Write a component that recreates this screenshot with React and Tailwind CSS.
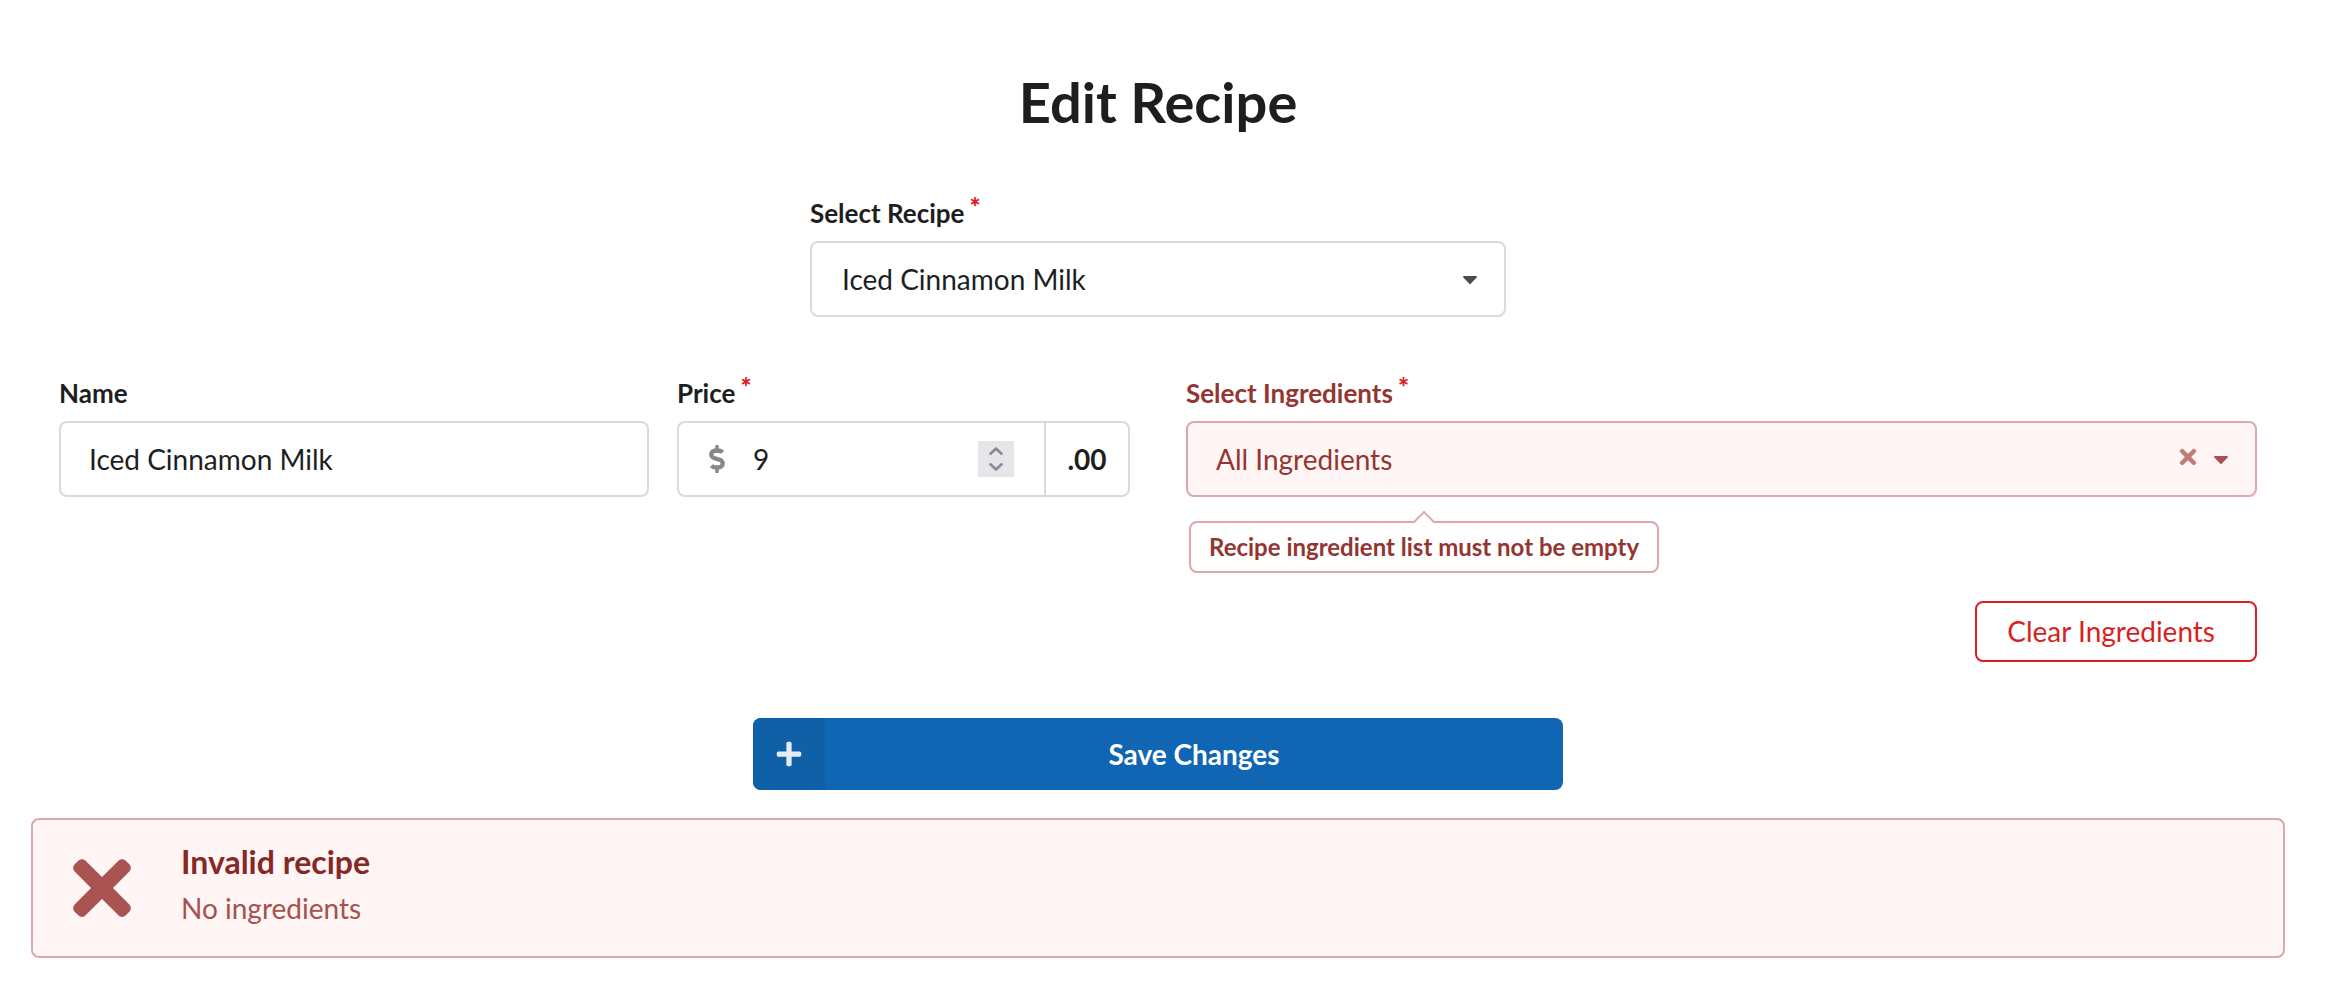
import { useState } from "react";
import { FaCaretDown, FaDollarSign, FaPlus, FaTimes } from "react-icons/fa";

function FieldLabel({ htmlFor, required, error, children }) {
  return (
    <label
      htmlFor={htmlFor}
      className={
        "flex items-start gap-[5px] text-[26px] leading-8 font-bold " +
        (error ? "text-[#943532]" : "text-[#1d1e1f]")
      }
    >
      {children}
      {required && <span className="-mt-1.5 font-black text-[#d91f22]">*</span>}
    </label>
  );
}

function Chevron({ d }) {
  return (
    <svg viewBox="0 0 14 8" className="h-2 w-3.5" fill="none" stroke="#8a8899" strokeWidth="2.6" strokeLinecap="round" strokeLinejoin="round" aria-hidden="true">
      <path d={d} />
    </svg>
  );
}

export default function App() {
  const [name, setName] = useState("Iced Cinnamon Milk");
  const [price, setPrice] = useState(9);

  return (
    <main className="bg-white pt-[66px] pr-[41px] pb-12 pl-[31px] font-['Lato',sans-serif] text-[28px] text-[#1d1e1f]">
      <h1 className="text-center text-[56px] leading-[72px] font-bold">Edit Recipe</h1>

      <form className="flex flex-col px-7 pt-[59px]" onSubmit={(e) => e.preventDefault()}>
        <div className="mx-auto flex w-[30%] min-w-[696px] flex-col gap-3">
          <FieldLabel htmlFor="recipe" required>Select Recipe</FieldLabel>
          <div className="grid items-center">
            <select
              id="recipe"
              className="col-start-1 row-start-1 h-[76px] w-full appearance-none rounded-lg border-2 border-[#dadadb] bg-white px-[30px] outline-none"
            >
              <option>Iced Cinnamon Milk</option>
            </select>
            <FaCaretDown className="pointer-events-none col-start-1 row-start-1 mr-6 size-6 justify-self-end text-[#4a4b4c]" />
          </div>
        </div>

        <div className="mt-[60px] grid grid-cols-[590fr_453fr_1099fr] items-start gap-7">
          <div className="flex flex-col gap-3">
            <FieldLabel htmlFor="name">Name</FieldLabel>
            <input
              id="name"
              type="text"
              value={name}
              onChange={(e) => setName(e.target.value)}
              className="h-[76px] w-full rounded-lg border-2 border-[#dadadb] px-7 outline-none"
            />
          </div>

          <div className="flex flex-col gap-3">
            <FieldLabel htmlFor="price" required>Price</FieldLabel>
            <div className="flex h-[76px] items-center rounded-lg border-2 border-[#dadadb]">
              <FaDollarSign className="ml-[30px] size-7 w-4 shrink-0 text-[#888889]" />
              <input
                id="price"
                type="number"
                value={price}
                onChange={(e) => setPrice(Number(e.target.value))}
                className="ml-7 w-0 min-w-0 grow appearance-none outline-none [-moz-appearance:textfield] [&::-webkit-inner-spin-button]:appearance-none"
              />
              <div className="mr-[30px] flex size-9 shrink-0 flex-col bg-[#e6e5ea]">
                <button type="button" aria-label="Increase price" onClick={() => setPrice(price + 1)} className="flex h-1/2 items-end justify-center pb-1">
                  <Chevron d="M1.5 6.7 7 1.5l5.500 5.200" />
                </button>
                <button type="button" aria-label="Decrease price" onClick={() => setPrice(price - 1)} className="flex h-1/2 items-start justify-center pt-1">
                  <Chevron d="M1.500 1.300 7 6.500l5.500-5.200" />
                </button>
              </div>
              <span className="flex h-full w-[84px] shrink-0 items-center justify-center border-l-2 border-[#dadadb] font-bold">.00</span>
            </div>
          </div>

          <div className="ml-7 flex flex-col">
            <FieldLabel htmlFor="ingredients" required error>Select Ingredients</FieldLabel>
            <div className="mt-3 grid items-center">
              <select
                id="ingredients"
                aria-invalid="true"
                aria-describedby="ingredients-error"
                className="col-start-1 row-start-1 h-[76px] w-full appearance-none rounded-lg border-2 border-[#dba9a9] bg-[#fff5f4] px-7 text-[#943532] outline-none"
              >
                <option>All Ingredients</option>
              </select>
              <div className="pointer-events-none col-start-1 row-start-1 mr-6 flex items-center gap-[9px] justify-self-end">
                <button type="button" aria-label="Clear selection" className="pointer-events-auto mb-1 text-[#c17b79]">
                  <FaTimes className="size-6" />
                </button>
                <FaCaretDown className="size-6 text-[#a95452]" />
              </div>
            </div>

            <div
              id="ingredients-error"
              role="alert"
              className="relative mt-6 ml-[3px] flex h-[52px] items-center self-start rounded-lg border-2 border-[#dba9a9] bg-white px-[18px] text-2xl font-bold text-[#943532]"
            >
              <span className="absolute -top-[9px] left-1/2 size-4 -translate-x-1/2 rotate-45 border-t-2 border-l-2 border-[#dba9a9] bg-white" />
              <span className="relative">Recipe ingredient list must not be empty</span>
            </div>

            <button
              type="button"
              className="mt-7 h-[61px] self-end rounded-lg border-2 border-[#d91f22] pr-10 pb-px pl-[30px] text-[#d91f22]"
            >
              Clear Ingredients
            </button>
          </div>
        </div>

        <button
          type="submit"
          className="mt-14 flex h-[72px] w-[37%] max-w-[810px] items-center self-center overflow-hidden rounded-lg bg-[#1066b3] font-bold text-white"
        >
          <span className="flex h-full w-[72px] shrink-0 items-center justify-center bg-[#1060a8]">
            <FaPlus className="size-7 text-[#e2edf5]" />
          </span>
          <span className="grow text-center">Save Changes</span>
        </button>
      </form>

      <section className="mt-7 flex min-h-[140px] items-center rounded-lg border-2 border-[#dba9a9] bg-[#fff5f4] px-[27px]">
        <FaTimes className="size-[84px] shrink-0 text-[#a95452]" />
        <div className="ml-[37px] flex flex-col gap-2 pb-1">
          <h2 className="text-[32px] leading-9 font-bold text-[#862826]">Invalid recipe</h2>
          <p className="leading-10 text-[#a6514f]">No ingredients</p>
        </div>
      </section>
    </main>
  );
}
